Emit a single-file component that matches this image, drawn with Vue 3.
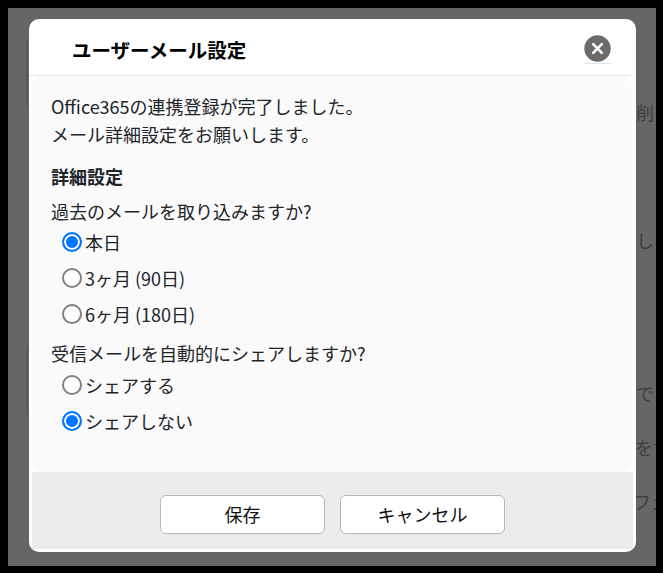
<script setup>
const history = [
  { label: '本日', checked: true },
  { label: '3ヶ月 (90日)', checked: false },
  { label: '6ヶ月 (180日)', checked: false },
]
const share = [
  { label: 'シェアする', checked: false },
  { label: 'シェアしない', checked: true },
]
const behind = [
  { text: '削', top: 100, left: 636 },
  { text: 'し', top: 228, left: 636 },
  { text: 'で', top: 381, left: 636 },
  { text: 'を寸', top: 435, left: 635 },
  { text: 'フェ', top: 489, left: 633 },
]
</script>

<template>
  <div class="frame">
    <div class="backdrop">
      <span class="bar bar-top"></span>
      <span class="bar bar-bottom"></span>
      <span
        v-for="b in behind"
        :key="b.text"
        class="behind"
        :style="{ top: b.top - 8 + 'px', left: b.left - 8 + 'px' }"
      >{{ b.text }}</span>

      <div class="modal">
        <header class="head">
          <h1 class="title">ユーザーメール設定</h1>
          <button class="close" aria-label="閉じる">
            <svg width="27" height="27" viewBox="0 0 27 27">
              <circle cx="13.5" cy="13.5" r="13.2" fill="#6b6b6b" />
              <path d="M9.2 9.2l8.6 8.6M17.8 9.2l-8.6 8.6" stroke="#fff" stroke-width="2.6" stroke-linecap="round" />
            </svg>
          </button>
        </header>

        <main class="body">
          <p class="intro">Office365の連携登録が完了しました。<br />メール詳細設定をお願いします。</p>
          <h2 class="section">詳細設定</h2>
          <p class="question">過去のメールを取り込みますか?</p>
          <div class="options">
            <label v-for="o in history" :key="o.label" class="option">
              <input class="radio" type="radio" name="history" :checked="o.checked" />{{ o.label }}
            </label>
          </div>
          <p class="question second">受信メールを自動的にシェアしますか?</p>
          <div class="options share">
            <label v-for="o in share" :key="o.label" class="option">
              <input class="radio" type="radio" name="share" :checked="o.checked" />{{ o.label }}
            </label>
          </div>
        </main>

        <footer class="foot">
          <button class="btn">保存</button>
          <button class="btn">キャンセル</button>
        </footer>
      </div>
    </div>
  </div>
</template>

<style>
html, body { margin: 0; background: #000; }
</style>

<style scoped>
.frame {
  width: 663px;
  height: 573px;
  box-sizing: border-box;
  padding: 8px 7px 7px 8px;
  background: #000;
  font-family: "Noto Sans CJK JP", "Noto Sans", sans-serif;
  color: #212529;
  overflow: hidden;
}
.backdrop {
  position: relative;
  height: 558px;
  box-sizing: border-box;
  padding: 11px 20px 14px 21px;
  background: #666;
  overflow: hidden;
}
.bar {
  position: absolute;
  left: 18px;
  width: 2px;
  background: #5a5a5a;
}
.bar-top { top: 31px; height: 67px; }
.bar-bottom { top: 338px; height: 69px; }
.behind {
  position: absolute;
  font-size: 18px;
  line-height: 24px;
  color: #3f3f3f;
  white-space: nowrap;
}
.modal {
  position: relative;
  height: 533px;
  box-sizing: border-box;
  display: flex;
  flex-direction: column;
  background: #fff;
  border-radius: 10px;
  padding-bottom: 3px;
  overflow: hidden;
}
.head {
  height: 57px;
  flex: none;
  display: flex;
  align-items: center;
  justify-content: space-between;
  padding: 5px 22px 0 43px;
  box-sizing: border-box;
  border-bottom: 1px solid #e4e4e4;
  margin: 0 3px 0 0;
}
.title {
  margin: 0;
  font-size: 19.5px;
  line-height: 28px;
  font-weight: 700;
  color: #000;
}
.close {
  padding: 0 0 1px;
  border: 0;
  border-bottom: 1px solid #d8e8f4;
  background: none;
  width: 27px;
  height: 29px;
  box-sizing: border-box;
}
.close svg { display: block; }
.body {
  flex: 1;
  margin: 0 4px 0 3px;
  padding: 16px 19px 0;
  background: #fafafa;
  border-radius: 10px;
  font-size: 18px;
  line-height: 28px;
  box-sizing: border-box;
}
.intro { margin: 0; }
.section {
  margin: 14px 0 7px;
  font-size: 18px;
  line-height: 28px;
  font-weight: 700;
}
.question { margin: 0; }
.second { margin-top: 11px; }
.options {
  display: flex;
  flex-direction: column;
  gap: 8px;
  margin-top: 3px;
  padding-left: 11px;
}
.share { margin-top: 4px; }
.option {
  display: flex;
  align-items: center;
  gap: 3px;
  height: 28px;
}
.radio {
  appearance: none;
  width: 20px;
  height: 20px;
  flex: none;
  margin: 0;
  box-sizing: border-box;
  border-radius: 50%;
  border: 2px solid #808080;
  background: #fff;
}
.radio:checked {
  border-color: #0075ff;
  box-shadow: inset 0 0 0 2px #fff;
  background: #0075ff;
}
.foot {
  flex: none;
  height: 77px;
  margin: 0 3px;
  background: #ececec;
  display: flex;
  justify-content: center;
  align-items: center;
  gap: 15px;
  padding-top: 7px;
  box-sizing: border-box;
}
.btn {
  width: 165px;
  height: 39px;
  box-sizing: border-box;
  border: 1px solid #b4b8bb;
  border-radius: 6px;
  background: #fff;
  font-family: inherit;
  font-size: 18px;
  color: #111;
  padding: 0;
}
</style>
